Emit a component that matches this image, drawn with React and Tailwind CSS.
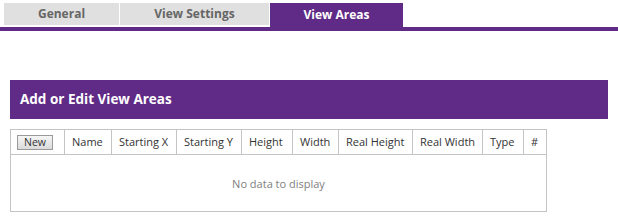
import React from "react";

const cols = [
  { w: "w-[53px]", label: null },
  { w: "w-[47px]", label: "Name" },
  { w: "w-[65px]", label: "Starting X" },
  { w: "w-[65px]", label: "Starting Y" },
  { w: "w-[51px]", label: "Height" },
  { w: "w-[46px]", label: "Width" },
  { w: "w-[74px]", label: "Real Height" },
  { w: "w-[70px]", label: "Real Width" },
  { w: "w-[41px]", label: "Type" },
  { w: "w-[23px]", label: "#" },
];

export default function App() {
  return (
    <div
      className="w-[618px] h-[218px] bg-white overflow-hidden"
      style={{ fontFamily: '"Open Sans", "Noto Sans", sans-serif' }}
    >
      <div className="flex items-start gap-[1px] pl-[4px] pt-[3px] h-[27px]">
        <div className="w-[115px] h-[22px] bg-[#e0e0e0] flex items-center justify-center text-[12px] font-bold text-[#666]">
          General
        </div>
        <div className="w-[149px] h-[22px] bg-[#e0e0e0] flex items-center justify-center text-[12px] font-bold text-[#666]">
          View Settings
        </div>
        <div className="w-[133px] h-[24px] bg-[#5f2b86] flex items-center justify-center text-[12px] font-bold text-white">
          View Areas
        </div>
      </div>
      <div className="h-[4px] bg-[#5f2b86]" />
      <div className="px-[10px] pt-[49px]">
        <div className="h-[39px] bg-[#5f2b86] flex items-center pl-[10px] text-white font-bold text-[13.5px]">
          Add or Edit View Areas
        </div>
        <div className="mt-[10px] w-[537px] border border-[#c4c4c4]">
          <div className="flex h-[25px] border-b border-[#c4c4c4] text-[11px] text-[#333]">
            {cols.map((c, i) => (
              <div
                key={i}
                className={`${c.w} ${i > 0 ? "border-l border-[#c4c4c4] pl-[7px]" : "pl-[6px]"} flex items-center whitespace-nowrap overflow-hidden`}
              >
                {c.label === null ? (
                  <button className="w-[36px] h-[15px] border border-[#9a9a9a] bg-gradient-to-b from-[#f6f6f6] to-[#dadada] text-[10.5px] text-[#333] leading-none flex items-center justify-center">
                    New
                  </button>
                ) : (
                  c.label
                )}
              </div>
            ))}
          </div>
          <div className="h-[56px] flex items-center justify-center pt-[2px] text-[11px] text-[#808080]">
            No data to display
          </div>
        </div>
      </div>
    </div>
  );
}
